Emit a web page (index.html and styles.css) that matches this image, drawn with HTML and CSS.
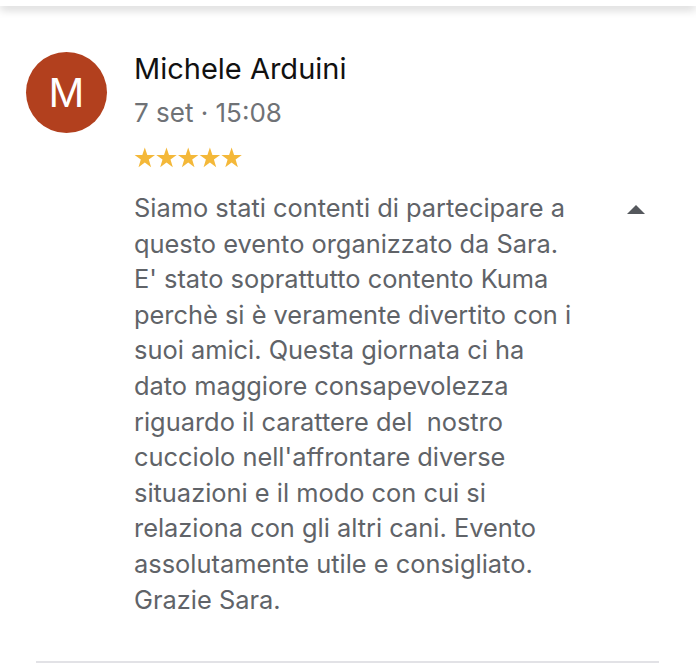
FILE: index.html
```html
<!DOCTYPE html>
<html lang="it">
<head>
<meta charset="utf-8">
<link rel="stylesheet" href="styles.css">
</head>
<body>
<div class="topbar"></div>
<div class="review">
  <div class="avatar">M</div>
  <div class="main">
    <div class="name">Michele Arduini</div>
    <div class="date">7 set · 15:08</div>
    <div class="stars">
      <svg width="110" height="22" viewBox="0 0 110 22">
        <defs>
          <polygon id="st" points="10.8,0.5 13.3,7.9 21,7.9 14.8,12.6 17.1,20.3 10.8,15.6 4.5,20.3 6.8,12.6 0.6,7.9 8.3,7.9"/>
        </defs>
        <use href="#st" x="0" fill="#f4b839"/>
        <use href="#st" x="21.7" fill="#f4b839"/>
        <use href="#st" x="43.4" fill="#f4b839"/>
        <use href="#st" x="65.1" fill="#f4b839"/>
        <use href="#st" x="86.8" fill="#f4b839"/>
      </svg>
    </div>
    <div class="body-row">
      <p class="text">Siamo stati contenti di partecipare a<br>questo evento organizzato da Sara.<br>E' stato soprattutto contento Kuma<br>perchè si è veramente divertito con i<br>suoi amici. Questa giornata ci ha<br>dato maggiore consapevolezza<br>riguardo il carattere del&nbsp; nostro<br>cucciolo nell'affrontare diverse<br>situazioni e il modo con cui si<br>relaziona con gli altri cani. Evento<br>assolutamente utile e consigliato.<br>Grazie Sara.</p>
      <div class="toggle"><span class="tri"></span></div>
    </div>
  </div>
</div>
<div class="divider"></div>
</body>
</html>
```

FILE: styles.css
```css
html, body {
  margin: 0;
  padding: 0;
  background: #ffffff;
}
body {
  width: 696px;
  height: 669px;
  overflow: hidden;
  font-family: Inter, "Liberation Sans", Arial, sans-serif;
}
.topbar {
  height: 6px;
  background: #ffffff;
  box-shadow: 0 3px 10px rgba(0, 0, 0, 0.22);
  position: relative;
  z-index: 1;
}
.review {
  display: flex;
  padding: 46px 0 0 26px;
}
.avatar {
  width: 81px;
  height: 81px;
  border-radius: 50%;
  background: #b2401e;
  color: #ffffff;
  font-family: "Liberation Sans", Arial, sans-serif;
  font-size: 43px;
  line-height: 81px;
  text-align: center;
  flex-shrink: 0;
}
.main {
  margin-left: 27px;
  flex: 1;
}
.name {
  font-size: 29px;
  line-height: 34px;
  color: #111111;
  margin-top: 0;
}
.date {
  font-size: 26px;
  line-height: 32px;
  color: #6f7276;
  margin-top: 11px;
}
.stars {
  margin-top: 18px;
  height: 22px;
}
.stars svg {
  display: block;
}
.body-row {
  display: flex;
  margin-top: 21px;
}
.text {
  margin: 0;
  font-size: 25.4px;
  line-height: 35.6px;
  color: #606368;
  width: 480px;
}
.toggle {
  margin-left: 13px;
  padding-top: 15px;
}
.tri {
  display: block;
  width: 0;
  height: 0;
  border-left: 9.5px solid transparent;
  border-right: 9.5px solid transparent;
  border-bottom: 9px solid #55585d;
}
.divider {
  margin: 44px 37px 0 36px;
  height: 2px;
  background: #e2e2e6;
}
```
